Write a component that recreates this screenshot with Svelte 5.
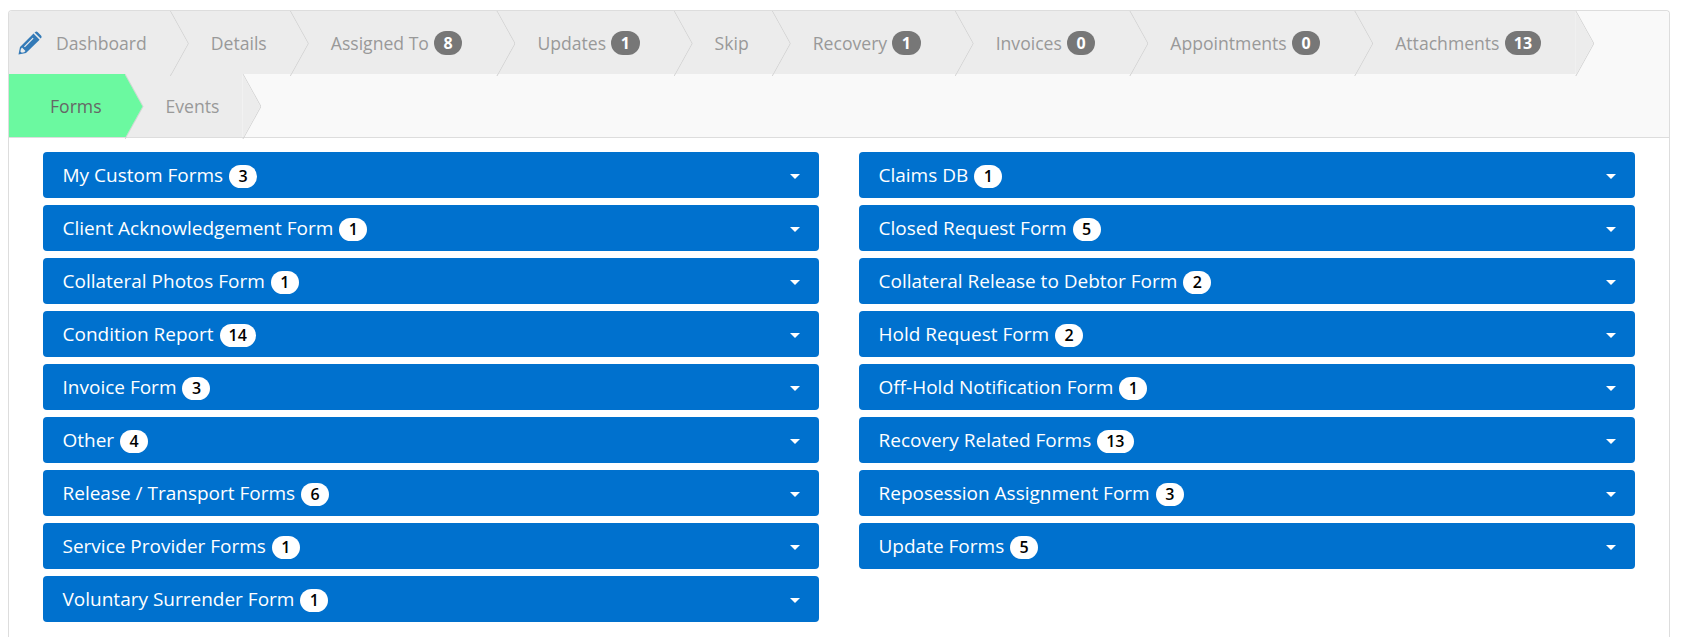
<script lang="ts">
	type Tab = { label: string; count?: number; active?: boolean; icon?: boolean };
	type Form = { name: string; count: number };

	const tabs: Tab[] = [
		{ label: 'Dashboard', icon: true },
		{ label: 'Details' },
		{ label: 'Assigned To', count: 8 },
		{ label: 'Updates', count: 1 },
		{ label: 'Skip' },
		{ label: 'Recovery', count: 1 },
		{ label: 'Invoices', count: 0 },
		{ label: 'Appointments', count: 0 },
		{ label: 'Attachments', count: 13 },
		{ label: 'Forms', active: true },
		{ label: 'Events' }
	];

	const leftForms: Form[] = [
		{ name: 'My Custom Forms', count: 3 },
		{ name: 'Client Acknowledgement Form', count: 1 },
		{ name: 'Collateral Photos Form', count: 1 },
		{ name: 'Condition Report', count: 14 },
		{ name: 'Invoice Form', count: 3 },
		{ name: 'Other', count: 4 },
		{ name: 'Release / Transport Forms', count: 6 },
		{ name: 'Service Provider Forms', count: 1 },
		{ name: 'Voluntary Surrender Form', count: 1 }
	];

	const rightForms: Form[] = [
		{ name: 'Claims DB', count: 1 },
		{ name: 'Closed Request Form', count: 5 },
		{ name: 'Collateral Release to Debtor Form', count: 2 },
		{ name: 'Hold Request Form', count: 2 },
		{ name: 'Off-Hold Notification Form', count: 1 },
		{ name: 'Recovery Related Forms', count: 13 },
		{ name: 'Reposession Assignment Form', count: 3 },
		{ name: 'Update Forms', count: 5 }
	];
</script>

{#snippet column(forms: Form[])}
	<div class="column">
		{#each forms as form}
			<button type="button" class="form-btn">
				<span class="name">{form.name}<span class="pill">{form.count}</span></span>
				<span class="caret"></span>
			</button>
		{/each}
	</div>
{/snippet}

<div class="panel">
	<div class="heading">
		{#each tabs as tab}
			<div class="tab" class:active={tab.active} class:first={tab.icon}>
				{#if tab.icon}
					<svg class="pencil" viewBox="0 0 24 24" aria-hidden="true">
						<path
							fill-rule="evenodd"
							d="M0.5 23.5 L2 16 L15.5 2.6 L21.6 8.7 L8 22 Z M4 16.6 L2.9 18 L2.4 20.4 L3.8 21.8 L6.2 21.2 L7.5 20 Z M6 15.4 L6.9 16.3 L15.6 7.6 L14.7 6.7 Z"
						/>
						<path d="M17 1.2 Q18.4 0 19.8 1.2 L23 4.4 Q24.2 5.8 23 7.2 L22.6 7.6 L16.5 1.6 Z" />
					</svg>
				{/if}
				<span>{tab.label}</span>
				{#if tab.count !== undefined}
					<span class="count">{tab.count}</span>
				{/if}
			</div>
		{/each}
	</div>
	<div class="body">
		{@render column(leftForms)}
		{@render column(rightForms)}
	</div>
</div>

<style>
	:global(body) {
		margin: 0;
		background: #fff;
		font-family: 'Open Sans', sans-serif;
	}

	.panel {
		margin: 10px 33px 0 8px;
		border: 1px solid #ddd;
		border-bottom: 0;
		border-radius: 4px 4px 0 0;
		height: 627px;
		box-sizing: border-box;
	}

	.heading {
		display: flex;
		flex-wrap: wrap;
		background: #f9f9f9;
		border-bottom: 1px solid #ddd;
		border-radius: 4px 4px 0 0;
	}

	.tab {
		position: relative;
		display: flex;
		align-items: center;
		gap: 5px;
		box-sizing: border-box;
		height: 63px;
		padding: 0 23px 0 41px;
		background: #ececec;
		color: #999;
		font-size: 17.6px;
		white-space: nowrap;
	}

	.tab.first {
		padding-left: 9px;
		gap: 14px;
		border-top-left-radius: 3px;
	}

	.tab.active {
		background: #6bf9a0;
		color: #666;
	}

	/* arrow tip: thin line layer, fill layer just inside it */
	.tab::before,
	.tab::after {
		content: '';
		position: absolute;
		top: 0;
		z-index: 1;
	}

	.tab::before {
		right: -19px;
		width: 19px;
		height: 65px;
		background: #d2d2d2;
		clip-path: polygon(1px 0, 19px 32.5px, 1px 65px, 0 65px, 18px 32.5px, 0 0);
	}

	.tab::after {
		right: -18px;
		width: 18px;
		height: 63px;
		background: inherit;
		clip-path: polygon(0 0, 18px 32.5px, 1.1px 63px, 0 63px);
	}

	.pencil {
		width: 24px;
		height: 24px;
		fill: #337ab7;
		flex: none;
	}

	.count {
		display: inline-block;
		min-width: 10px;
		margin-right: 11px;
		padding: 3px 9.25px;
		border-radius: 12px;
		background: #777;
		color: #fff;
		font-size: 16px;
		font-weight: 700;
		line-height: 18px;
		text-align: center;
	}

	.body {
		display: flex;
		gap: 40px;
		padding: 14px 34px 0;
	}

	.column {
		flex: 1 1 0;
		display: flex;
		flex-direction: column;
		gap: 7px;
	}

	.form-btn {
		display: flex;
		align-items: center;
		justify-content: space-between;
		box-sizing: border-box;
		height: 46px;
		padding: 0 19px 1px 19.5px;
		border: 0;
		border-radius: 4px;
		background: #0071ce;
		color: #fff;
		font-family: inherit;
		font-size: 19px;
		text-align: left;
	}

	.pill {
		display: inline-block;
		min-width: 10px;
		margin-left: 6px;
		padding: 1px 9px 2px;
		border-radius: 12px;
		background: #fff;
		color: #000;
		font-size: 16px;
		font-weight: 600;
		line-height: 20px;
		text-align: center;
	}

	.caret {
		width: 0;
		height: 0;
		border-top: 5px solid #fff;
		border-left: 5px solid transparent;
		border-right: 5px solid transparent;
		margin-top: 3px;
	}
</style>
